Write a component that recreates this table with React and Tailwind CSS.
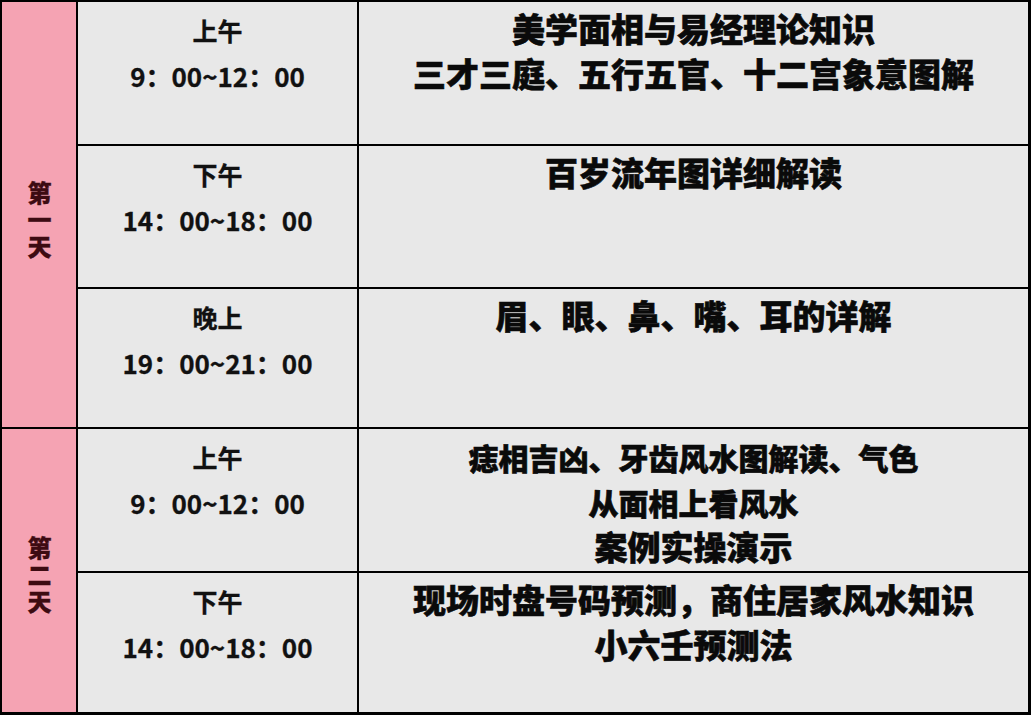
import React from "react";

const font = { fontFamily: '"Noto Sans CJK SC", "Noto Sans", sans-serif' };

function Slot({ label, time }) {
  return (
    <div className="bg-[#e8e8e8] flex flex-col items-center pt-[6px] text-[25px] leading-[45px] font-bold text-[#111]">
      <div className="[-webkit-text-stroke:0.3px_#111]">{label}</div>
      <div className="text-[26px] [-webkit-text-stroke:0.3px_#111]">{time}</div>
    </div>
  );
}

function Content({ lines, small }) {
  return (
    <div
      className={
        small
          ? "bg-[#e8e8e8] flex flex-col items-center pt-[6px] leading-[44.5px] font-black text-[#0a0a0a] [-webkit-text-stroke:0.6px_#0a0a0a]"
          : "bg-[#e8e8e8] flex flex-col items-center pt-[4px] text-[33px] leading-[45px] font-black text-[#0a0a0a] [-webkit-text-stroke:0.6px_#0a0a0a]"
      }
    >
      {lines.map((l, i) => (
        <div
          key={i}
          className={
            "whitespace-nowrap " +
            (small ? (i === 2 ? "text-[33px]" : "text-[30px]") : "")
          }
        >
          {l}
        </div>
      ))}
    </div>
  );
}

function Day({ text, className }) {
  return (
    <div className={"bg-[#f5a3b3] flex items-center justify-center " + className}>
      <div className="[writing-mode:vertical-rl] text-[24px] leading-[26px] tracking-[3px] font-black text-[#3d0b12] [-webkit-text-stroke:0.3px_#3d0b12]">
        {text}
      </div>
    </div>
  );
}

export default function App() {
  return (
    <div style={font} className="w-[1031px] h-[715px] bg-black pt-[2px] pl-[2px] pr-[3px] pb-[3px] overflow-hidden">
      <div className="grid grid-cols-[74px_279px_669px] grid-rows-[142px_141px_138px_142px_139px] gap-[2px] h-full">
        <Day text="第一天" className="row-span-3 pt-[14px]" />
        <Slot label="上午" time="9：00~12：00" />
        <Content lines={["美学面相与易经理论知识", "三才三庭、五行五官、十二宫象意图解"]} />
        <Slot label="下午" time="14：00~18：00" />
        <Content lines={["百岁流年图详细解读"]} />
        <Slot label="晚上" time="19：00~21：00" />
        <Content lines={["眉、眼、鼻、嘴、耳的详解"]} />
        <Day text="第二天" className="row-span-2 pt-[12px]" />
        <Slot label="上午" time="9：00~12：00" />
        <Content small lines={["痣相吉凶、牙齿风水图解读、气色", "从面相上看风水", "案例实操演示"]} />
        <Slot label="下午" time="14：00~18：00" />
        <Content lines={["现场时盘号码预测，商住居家风水知识", "小六壬预测法"]} />
      </div>
    </div>
  );
}
